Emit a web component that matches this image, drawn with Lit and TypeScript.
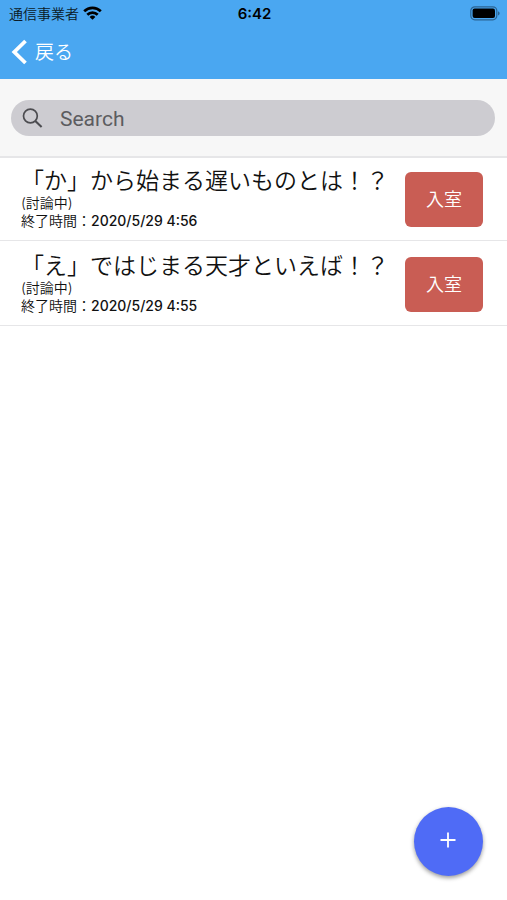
import { LitElement, html, css } from "lit";
import { customElement, property, state } from "lit/decorators.js";

interface Room {
  title: string;
  status: string;
  endsAt: string;
}

@customElement("status-bar")
class StatusBar extends LitElement {
  static styles = css`
    :host {
      display: grid;
      grid-template-columns: 1fr auto 1fr;
      align-items: center;
      height: 26px;
      padding: 0 7px 0 9px;
      color: #0b1a26;
    }
    .carrier {
      display: flex;
      align-items: center;
      gap: 4px;
      font-size: 14px;
      font-weight: 350;
    }
    .time {
      color: #000;
      font-size: 15px;
      font-weight: 600;
    }
    .battery {
      justify-self: end;
    }
    svg {
      display: block;
    }
  `;

  render() {
    return html`
      <div class="carrier">
        <span>通信事業者</span>
        <svg width="19" height="14" viewBox="0 0 19 14" aria-hidden="true">
          <g fill="none" stroke="#000" stroke-width="2.7">
            <path d="M1.2 5.3a11.8 11.8 0 0 1 16.6 0" />
            <path d="M4.3 8.7a7.4 7.4 0 0 1 10.4 0" />
          </g>
          <path d="M9.5 13.8 6.6 10.9a4.2 4.2 0 0 1 5.8 0z" fill="#000" />
        </svg>
      </div>
      <span class="time">6:42</span>
      <svg class="battery" width="30" height="15" viewBox="0 0 30 15" aria-hidden="true">
        <rect x="0.8" y="0.8" width="26" height="13" rx="4" fill="none" stroke="#2b6493" stroke-width="1.2" />
        <rect x="2.6" y="2.6" width="22.4" height="9.4" rx="2" fill="#000" />
        <path d="M28 5.2c2.2.8 2.2 3.4 0 4.2z" fill="#2b6493" />
      </svg>
    `;
  }
}

@customElement("room-item")
class RoomItem extends LitElement {
  @property({ attribute: false }) room!: Room;

  static styles = css`
    :host {
      display: flex;
      justify-content: space-between;
      align-items: flex-start;
      gap: 12px;
      padding: 12px 24px 10px 21px;
      border-bottom: 1px solid #e6e6e8;
    }
    .title {
      margin: 0;
      font-size: 23px;
      font-weight: 350;
      line-height: 26px;
      color: #111;
    }
    .meta {
      margin: 0;
      font-size: 14px;
      font-weight: 350;
      line-height: 18px;
      color: #111;
    }
    .date {
      font-weight: 500;
    }
    .enter {
      flex: none;
      width: 78px;
      height: 55px;
      margin-top: 4px;
      padding: 0 0 3px;
      border: 0;
      border-radius: 6px;
      background: #c95d54;
      color: #fff;
      font: inherit;
      font-size: 18px;
      font-weight: 350;
    }
  `;

  render() {
    return html`
      <div>
        <h2 class="title">${this.room.title}</h2>
        <p class="meta">${this.room.status}</p>
        <p class="meta">終了時間：<time class="date">${this.room.endsAt}</time></p>
      </div>
      <button class="enter" type="button">入室</button>
    `;
  }
}

@customElement("app-root")
class AppRoot extends LitElement {
  @state() private rooms: Room[] = [
    { title: "「か」から始まる遅いものとは！？", status: "(討論中)", endsAt: "2020/5/29 4:56" },
    { title: "「え」ではじまる天才といえば！？", status: "(討論中)", endsAt: "2020/5/29 4:55" },
  ];

  static styles = css`
    :host {
      display: block;
      min-height: 100vh;
      background: #fff;
      font-family: Inter, "Noto Sans CJK JP", sans-serif;
    }
    .header {
      background: #4aa7f1;
    }
    .nav {
      display: flex;
      height: 53px;
      padding: 0 11px;
    }
    .back {
      display: flex;
      align-items: center;
      gap: 8px;
      padding: 0 0 4px;
      border: 0;
      background: none;
      color: #fff;
      font: inherit;
      font-size: 19px;
      font-weight: 350;
    }
    .back svg {
      margin-top: 2px;
    }
    .search {
      padding: 21px 12px 20px 11px;
      box-shadow: 0 2px 0 #e6e6e8;
      background: #f7f7f7;
    }
    .field {
      display: flex;
      align-items: center;
      gap: 16px;
      height: 36px;
      padding: 0 11px;
      border-radius: 18px;
      background: #cdccd1;
    }
    .input {
      flex: 1;
      min-width: 0;
      padding: 2px 0 0;
      border: 0;
      outline: 0;
      background: none;
      color: #333;
      font-family: Roboto, "Noto Sans CJK JP", sans-serif;
      font-size: 21px;
      line-height: 28px;
    }
    .input::placeholder {
      color: #5c5c60;
      opacity: 1;
    }
    .add {
      position: fixed;
      right: 24px;
      bottom: 24px;
      display: grid;
      place-items: center;
      width: 69px;
      height: 69px;
      padding: 0 2px 3px 0;
      border: 0;
      border-radius: 50%;
      background: #4f6bf6;
      box-shadow: 0 2px 4px rgba(0, 0, 0, 0.4);
    }
  `;

  render() {
    return html`
      <header class="header">
        <status-bar></status-bar>
        <nav class="nav">
          <button class="back" type="button">
            <svg width="16" height="26" viewBox="0 0 16 26" aria-hidden="true">
              <path d="M14.5 2 3.3 13l11.2 11" fill="none" stroke="#fff" stroke-width="3.8" />
            </svg>
            <span>戻る</span>
          </button>
        </nav>
      </header>
      <div class="search">
        <label class="field">
          <svg width="22" height="22" viewBox="0 0 22 22" aria-hidden="true">
            <g fill="none" stroke="#4c4c50" stroke-width="1.7">
              <circle cx="8.4" cy="9" r="6.9" />
              <path d="M13.3 13.9 19.6 20" stroke-width="2.1" />
            </g>
          </svg>
          <input class="input" type="text" placeholder="Search" aria-label="Search" />
        </label>
      </div>
      <main>${this.rooms.map((room) => html`<room-item .room=${room}></room-item>`)}</main>
      <button class="add" type="button" aria-label="追加">
        <svg width="16" height="16" viewBox="0 0 16 16" aria-hidden="true">
          <path d="M8 .5v15M.5 8h15" stroke="#fff" stroke-width="1.8" />
        </svg>
      </button>
    `;
  }
}
